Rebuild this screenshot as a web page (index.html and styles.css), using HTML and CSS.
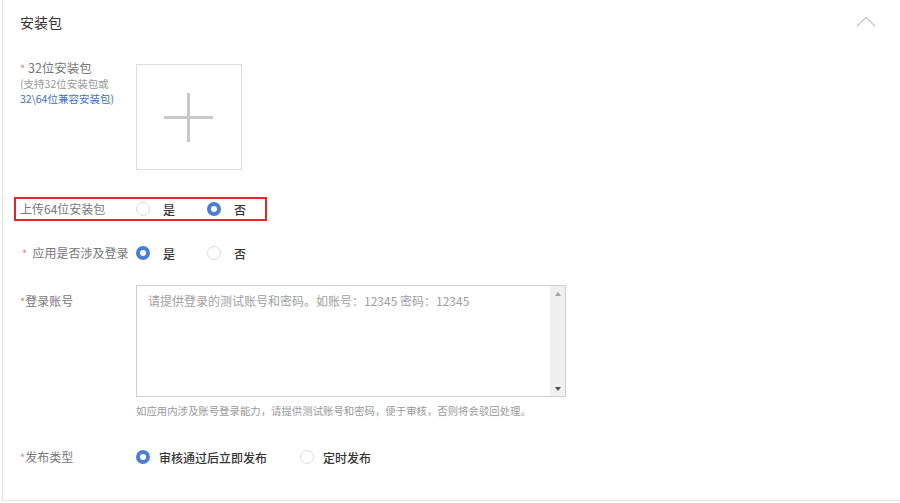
FILE: index.html
```html
<!DOCTYPE html>
<html lang="zh-CN">
<head>
  <meta charset="UTF-8" />
  <title>安装包</title>
  <link rel="stylesheet" href="styles.css">
</head>
<body>
  <div class="card">
    <div class="card-head">
      <span class="title">安装包</span>
      <svg class="chevron" width="20" height="11" viewBox="0 0 20 11">
        <path d="M1 10 L10 1.5 L19 10" fill="none" stroke="#c9c9c9" stroke-width="1.4"/>
      </svg>
    </div>

    <div class="row row-upload">
      <div class="label">
        <div class="main"><span class="req">*</span> 32位安装包</div>
        <div class="sub">(支持32位安装包或</div>
        <div class="sub blue">32\64位兼容安装包)</div>
      </div>
      <div class="upload"><span class="plus"></span></div>
    </div>

    <div class="row row-radio marked">
      <div class="label">上传64位安装包</div>
      <label class="opt"><span class="radio"></span><span class="txt">是</span></label>
      <label class="opt"><span class="radio on"></span><span class="txt">否</span></label>
    </div>

    <div class="row row-radio login">
      <div class="label"><span class="req">*</span>&nbsp; 应用是否涉及登录</div>
      <label class="opt"><span class="radio on"></span><span class="txt">是</span></label>
      <label class="opt"><span class="radio"></span><span class="txt">否</span></label>
    </div>

    <div class="row row-account">
      <div class="label"><span class="req">*</span>登录账号</div>
      <div class="field">
        <div class="textbox">
          <textarea placeholder="请提供登录的测试账号和密码。如账号：12345 密码：12345"></textarea>
          <div class="scrollbar">
            <span class="arr up"></span>
            <span class="arr down"></span>
          </div>
        </div>
        <div class="hint">如应用内涉及账号登录能力，请提供测试账号和密码，便于审核，否则将会驳回处理。</div>
      </div>
    </div>

    <div class="row row-radio publish">
      <div class="label"><span class="req">*</span>发布类型</div>
      <label class="opt"><span class="radio on"></span><span class="txt">审核通过后立即发布</span></label>
      <label class="opt"><span class="radio"></span><span class="txt">定时发布</span></label>
    </div>
  </div>
</body>
</html>
```

FILE: styles.css
```css
* { margin: 0; padding: 0; box-sizing: border-box; }

body {
  background: #fff;
  font-family: "Noto Sans CJK SC", "Noto Sans", sans-serif;
  font-size: 12px;
  color: #333;
}

.card {
  margin-left: 2px;
  height: 501px;
  border-left: 1px solid #e4e4e4;
  border-bottom: 1px solid #e4e4e4;
  padding-left: 17px;
}

.card-head {
  display: flex;
  justify-content: space-between;
  align-items: center;
  height: 44px;
}

.title {
  font-size: 14px;
  color: #333;
}

.chevron {
  margin-right: 24px;
  margin-top: -2px;
}

.row {
  display: flex;
}

.label {
  width: 116px;
  flex-shrink: 0;
  color: #777;
  line-height: 16px;
  white-space: nowrap;
}

.req {
  color: #e87e77;
  font-size: 11px;
}

/* 32位安装包 */
.row-upload {
  margin-top: 16px;
}

.row-upload .main {
  font-size: 12.5px;
}

.row-upload .sub {
  font-size: 10.5px;
  line-height: 15px;
  color: #999;
}

.row-upload .sub.blue {
  color: #3d6fc2;
}

.upload {
  position: relative;
  width: 106px;
  height: 106px;
  margin-top: 4px;
  border: 1px solid #dcdcdc;
}

.plus::before,
.plus::after {
  content: '';
  position: absolute;
  background: #c8c8c8;
}

.plus::before { left: 27px; top: 51px; width: 49px; height: 3px; }
.plus::after  { left: 50px; top: 28px; width: 3px; height: 49px; }

/* 单选行 */
.row-radio {
  align-items: center;
  height: 24px;
}

.row-radio .label {
  line-height: 24px;
}

.marked {
  width: 253px;
  margin-top: 27px;
  margin-left: -6px;
  padding-left: 4px;
  border: 2px solid #e3262b;
}

.login { margin-top: 20px; }
.login .label { padding-left: 2px; }

.opt {
  display: flex;
  align-items: center;
  margin-right: 32px;
}

.opt .txt {
  margin-left: 13px;
  color: #333;
  font-weight: 500;
}

.radio {
  width: 14px;
  height: 14px;
  border-radius: 50%;
  border: 1px solid #dcdcdc;
  background: #fff;
}

.radio.on {
  border: 4px solid #4a7fd3;
}

/* 登录账号 */
.row-account {
  margin-top: 20px;
}

.row-account .label {
  padding-top: 8px;
}

.textbox {
  display: flex;
  width: 430px;
  height: 112px;
  border: 1px solid #cfcfcf;
}

.textbox textarea {
  flex: 1;
  border: none;
  outline: none;
  resize: none;
  padding: 6px 11px;
  font-family: inherit;
  font-size: 12px;
  line-height: 18px;
  color: #333;
}

.textbox textarea::placeholder {
  color: #a0a0a0;
}

.scrollbar {
  width: 15px;
  background: #f0f0f0;
  display: flex;
  flex-direction: column;
  justify-content: space-between;
  align-items: center;
  padding: 6px 0 5px;
}

.arr {
  width: 0;
  height: 0;
  border-left: 3.5px solid transparent;
  border-right: 3.5px solid transparent;
}

.arr.up { border-bottom: 4px solid #a3a3a3; }
.arr.down { border-top: 4px solid #505050; }

.hint {
  margin-top: 6px;
  font-size: 10.4px;
  line-height: 16px;
  color: #999;
  white-space: nowrap;
}

/* 发布类型 */
.publish {
  margin-top: 26px;
}

.publish .opt .txt {
  margin-left: 9px;
}

.publish .opt {
  margin-right: 33px;
}
```
